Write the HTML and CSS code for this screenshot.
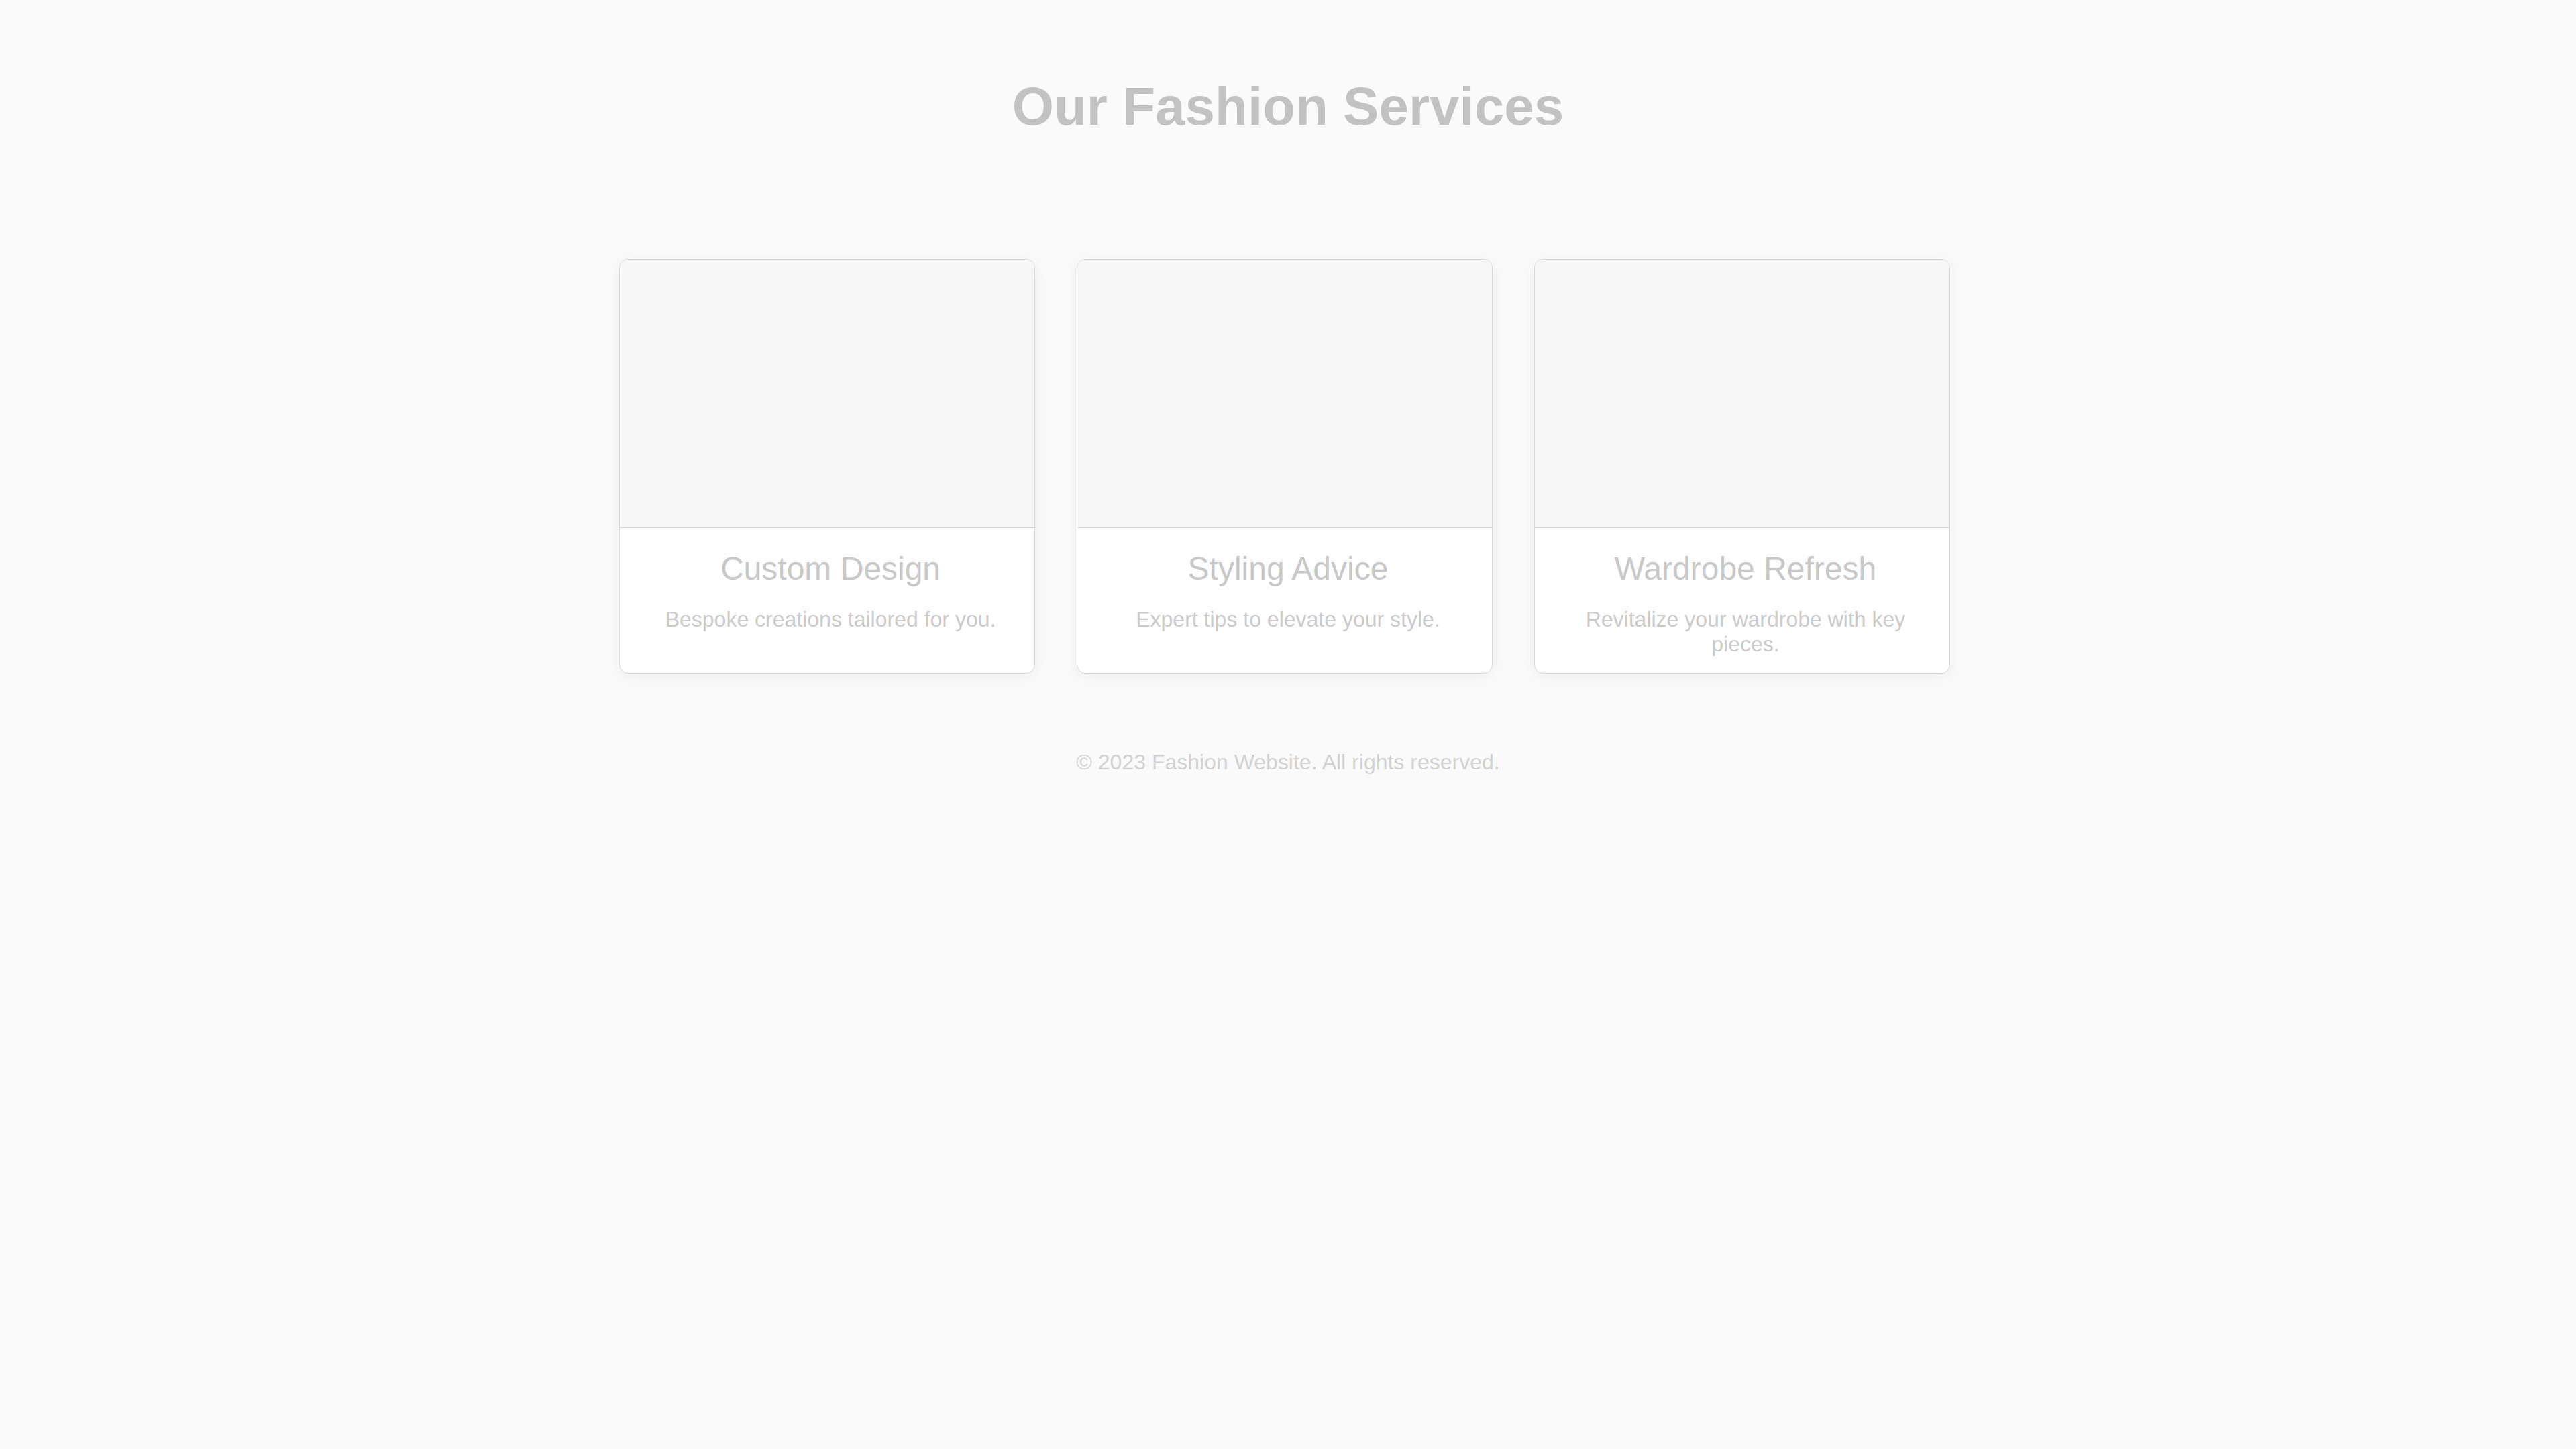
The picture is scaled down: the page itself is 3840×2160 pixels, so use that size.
FILE: index.html
```html
<!DOCTYPE html>
<html lang="en">
<head>
<meta charset="utf-8">
<title>Our Fashion Services</title>
<link rel="stylesheet" href="styles.css">
</head>
<body>
  <main class="page">
    <h1 class="page-title">Our Fashion Services</h1>
    <section class="services">
      <article class="card">
        <div class="card-media"></div>
        <div class="card-body">
          <h2 class="card-title">Custom Design</h2>
          <p class="card-text">Bespoke creations tailored for you.</p>
        </div>
      </article>
      <article class="card">
        <div class="card-media"></div>
        <div class="card-body">
          <h2 class="card-title">Styling Advice</h2>
          <p class="card-text">Expert tips to elevate your style.</p>
        </div>
      </article>
      <article class="card">
        <div class="card-media"></div>
        <div class="card-body">
          <h2 class="card-title">Wardrobe Refresh</h2>
          <p class="card-text">Revitalize your wardrobe with key pieces.</p>
        </div>
      </article>
    </section>
    <footer class="footer">© 2023 Fashion Website. All rights reserved.</footer>
  </main>
</body>
</html>
```

FILE: styles.css
```css
html, body {
  margin: 0;
  padding: 0;
  background: #fafafa;
}

body {
  font-family: "Liberation Sans", Arial, sans-serif;
  min-height: 2160px;
}

.page {
  display: flex;
  flex-direction: column;
  align-items: center;
  padding-top: 113px;
}

.page-title {
  margin: 0;
  font-size: 80px;
  font-weight: 700;
  color: #c2c2c2;
  line-height: normal;
}

.services {
  margin-top: 181px;
  margin-right: 10px;
  display: grid;
  grid-template-columns: repeat(3, 620px);
  gap: 62px;
}

.card {
  background: #ffffff;
  border: 1px solid #d8d8d8;
  border-radius: 13px;
  overflow: hidden;
  box-shadow: 0 4px 22px rgba(0, 0, 0, 0.05);
  display: flex;
  flex-direction: column;
}

.card-media {
  height: 399px;
  background: #f7f7f7;
  border-bottom: 1px solid #d2d2d2;
}

.card-body {
  padding: 33px 35px 24px 45px;
  text-align: center;
  flex: 1;
}

.card-title {
  margin: 0 0 30px;
  font-size: 48px;
  font-weight: 400;
  color: #c8c8c8;
  line-height: normal;
}

.card-text {
  margin: 0;
  font-size: 32px;
  color: #cbcbcb;
  line-height: normal;
}

.footer {
  margin-top: 114px;
  font-size: 32px;
  color: #d2d2d2;
  line-height: normal;
}
```
